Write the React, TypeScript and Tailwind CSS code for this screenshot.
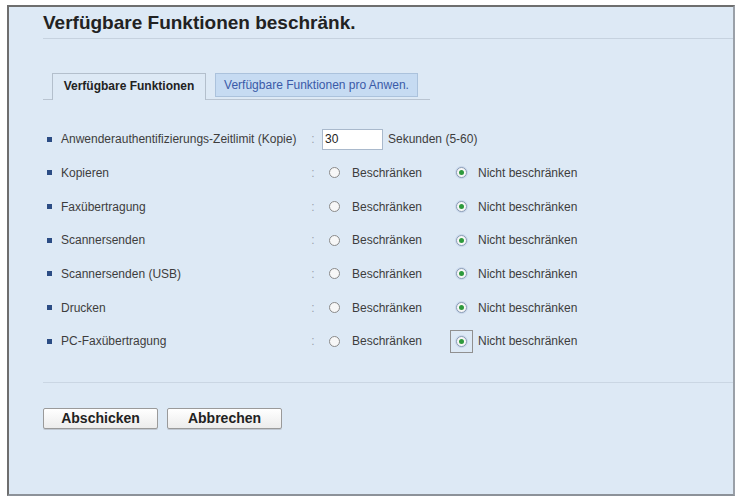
const rows = [
  "Kopieren",
  "Faxübertragung",
  "Scannersenden",
  "Scannersenden (USB)",
  "Drucken",
  "PC-Faxübertragung",
];

function Radio({ checked }: { checked?: boolean }) {
  return (
    <span
      className={
        "flex h-[11px] w-[11px] shrink-0 items-center justify-center rounded-full border bg-[#f7f7f7] " +
        (checked ? "border-[#8b9cb4] shadow-[0_0_0_1px_#c9d8ec]" : "border-[#8a8a8a]")
      }
    >
      {checked && <span className="h-[5px] w-[5px] rounded-full bg-[#2e9a3c]" />}
    </span>
  );
}

function Label({ children }: { children: React.ReactNode }) {
  return (
    <>
      <span className="ml-[4px] h-[5px] w-[5px] shrink-0 bg-[#2b4c84]" />
      <span className="ml-[9px] w-[249px] shrink-0 whitespace-nowrap">{children}</span>
      <span className="w-[6px] shrink-0 text-center text-[#9ba4ae]">:</span>
    </>
  );
}

export default function App() {
  return (
    <div className="min-h-screen bg-white pl-[7px] pt-[5px] font-['Liberation_Sans',Arial,sans-serif]">
      <div className="h-[491px] w-[728px] border-2 border-[#6e6e6e] border-r-[#9aa0a8] border-b-[#8c9299] bg-[#dde9f5] pl-[34px]">
        <div className="border-b border-[#c6d2df] pb-[4px] pt-[5px] text-[19px] font-bold leading-[22px] text-[#222]">
          Verfügbare Funktionen beschränk.
        </div>

        <div className="mt-[34px] flex h-[27px] w-[387px] items-end gap-[9px] border-b border-[#b9c4d1] pl-[9px] text-[12px]">
          <div className="-mb-px flex h-[27px] w-[154px] items-center justify-center border-x border-t border-[#b3bfcc] bg-[#dde9f5] pb-[2px] font-bold text-[#222]">
            Verfügbare Funktionen
          </div>
          <div className="mb-[2px] flex h-[24px] w-[203px] items-center justify-center border border-[#abc2dc] bg-[#c6dbf2] text-[#3a5aa8]">
            Verfügbare Funktionen pro Anwen.
          </div>
        </div>

        <div className="mt-[22.3px] text-[12px] text-[#3d3d3d]">
          <div className="flex h-[33.7px] items-center">
            <Label>Anwenderauthentifizierungs-Zeitlimit (Kopie)</Label>
            <input
              defaultValue="30"
              className="ml-[6px] h-[21px] w-[61px] border border-[#a9b9cc] bg-white px-[2px] text-[12px] text-[#222] outline-none"
            />
            <span className="ml-[5px]">Sekunden (5-60)</span>
          </div>
          {rows.map((r, i) => (
            <div key={r} className="flex h-[33.7px] items-center">
              <Label>{r}</Label>
              <span className="ml-[13px]">
                <Radio />
              </span>
              <span className="ml-[12px] w-[104px]">Beschränken</span>
              {i === rows.length - 1 ? (
                <span className="-m-[6px] flex h-[23px] w-[23px] shrink-0 items-center justify-center border border-[#909090]">
                  <Radio checked />
                </span>
              ) : (
                <Radio checked />
              )}
              <span className="ml-[11px]">Nicht beschränken</span>
            </div>
          ))}
        </div>

        <div className="mt-[23.8px] border-t border-[#cad6e3]" />

        <div className="mt-[25px] flex gap-[9px]">
          {["Abschicken", "Abbrechen"].map((b) => (
            <button
              key={b}
              className="h-[21px] w-[115px] rounded-[2px] border border-[#9a9a9a] bg-gradient-to-b from-white to-[#ececec] text-[14px] font-bold leading-none text-[#222] shadow-[0_1px_0_#c0c8d2]"
            >
              {b}
            </button>
          ))}
        </div>
      </div>
    </div>
  );
}
